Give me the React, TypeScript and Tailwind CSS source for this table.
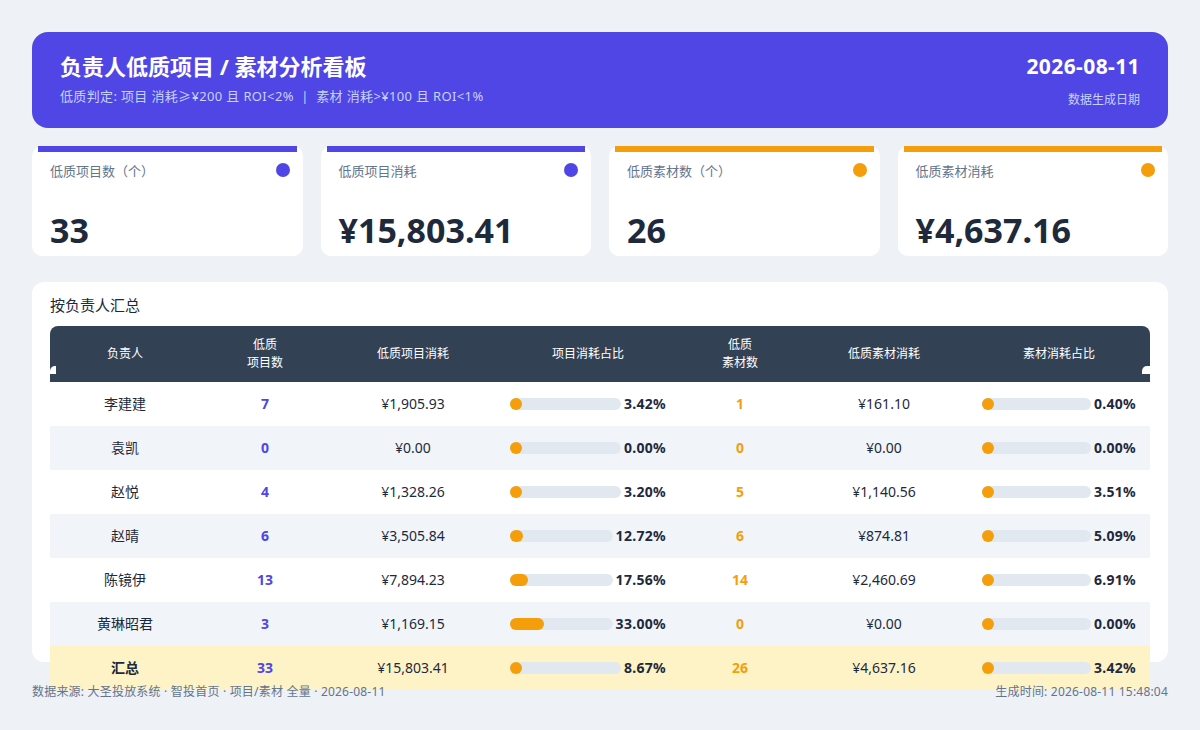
import React from "react";

const FONT = { fontFamily: '"Noto Sans", "Noto Sans CJK SC", sans-serif' };

const cards = [
  { label: "低质项目数（个）", value: "33", bar: "bg-[#4f46e5]" },
  { label: "低质项目消耗", value: "¥15,803.41", bar: "bg-[#4f46e5]" },
  { label: "低质素材数（个）", value: "26", bar: "bg-[#f59e0b]" },
  { label: "低质素材消耗", value: "¥4,637.16", bar: "bg-[#f59e0b]" },
];

const rows = [
  { name: "李建建", pc: 7, pcost: "¥1,905.93", pr: 3.42, mc: 1, mcost: "¥161.10", mr: 0.4 },
  { name: "袁凯", pc: 0, pcost: "¥0.00", pr: 0, mc: 0, mcost: "¥0.00", mr: 0 },
  { name: "赵悦", pc: 4, pcost: "¥1,328.26", pr: 3.2, mc: 5, mcost: "¥1,140.56", mr: 3.51 },
  { name: "赵晴", pc: 6, pcost: "¥3,505.84", pr: 12.72, mc: 6, mcost: "¥874.81", mr: 5.09 },
  { name: "陈镜伊", pc: 13, pcost: "¥7,894.23", pr: 17.56, mc: 14, mcost: "¥2,460.69", mr: 6.91 },
  { name: "黄琳昭君", pc: 3, pcost: "¥1,169.15", pr: 33.0, mc: 0, mcost: "¥0.00", mr: 0 },
];

const total = { name: "汇总", pc: 33, pcost: "¥15,803.41", pr: 8.67, mc: 26, mcost: "¥4,637.16", mr: 3.42 };

const COLS = "grid grid-cols-[150px_130px_166px_184px_120px_168px_182px]";

const Ratio = ({ value }: { value: number }) => (
  <div className="flex items-center gap-[3px] px-[14px]">
    <div className="flex-1 h-3 rounded-full bg-[#e2e8f0]">
      <div
        className="h-3 min-w-[12px] rounded-full bg-[#f59e0b]"
        style={{ width: `${value}%` }}
      />
    </div>
    <span className="text-sm font-bold tracking-[0.3px] text-[#1e293b]">{value.toFixed(2)}%</span>
  </div>
);

const Row = ({ r, bg, bold }: { r: typeof total; bg: string; bold?: boolean }) => (
  <div className={`${COLS} h-11 items-center text-sm text-[#1e293b] ${bg}`}>
    <div className={`text-center ${bold ? "font-bold" : ""}`}>{r.name}</div>
    <div className="text-center font-bold text-[#4f46e5]">{r.pc}</div>
    <div className="text-center">{r.pcost}</div>
    <Ratio value={r.pr} />
    <div className="text-center font-bold text-[#f59e0b]">{r.mc}</div>
    <div className="text-center">{r.mcost}</div>
    <Ratio value={r.mr} />
  </div>
);

export default function App() {
  return (
    <div style={FONT} className="w-[1200px] h-[730px] bg-[#eef1f6] px-8 pt-8 flex flex-col">
      {/* header */}
      <div className="h-24 shrink-0 rounded-2xl bg-[#4f46e5] px-7 pt-5 flex justify-between">
        <div>
          <h1 className="text-[22px] leading-7 font-bold text-white">负责人低质项目 / 素材分析看板</h1>
          <p className="mt-2 text-[13px] leading-4 tracking-[0.35px] text-[#c7d2fe]">
            低质判定: 项目 消耗≥¥200 且 ROI&lt;2% &nbsp;|&nbsp; 素材 消耗&gt;¥100 且 ROI&lt;1%
          </p>
        </div>
        <div className="text-right">
          <div className="text-[21px] leading-7 font-bold tracking-[0.4px] text-white">2026-08-11</div>
          <div className="mt-3 text-xs leading-4 text-[#c7d2fe]">数据生成日期</div>
        </div>
      </div>

      {/* stat cards */}
      <div className="mt-[18px] grid grid-cols-4 gap-[18px] shrink-0">
        {cards.map((c) => (
          <div key={c.label} className="relative h-[110px] rounded-[10px] bg-white px-[18px] pt-[15px]">
            <div className={`absolute top-0 left-1.5 right-1.5 h-1.5 ${c.bar}`} />
            <div className={`absolute top-[17px] right-[13px] w-3.5 h-3.5 rounded-full ${c.bar}`} />
            <div className="text-[13px] leading-5 text-[#64748b]">{c.label}</div>
            <div className="mt-[29px] text-[34px] leading-10 font-bold text-[#1e293b]">{c.value}</div>
          </div>
        ))}
      </div>

      {/* table */}
      <div className="mt-[26px] h-[380px] shrink-0 rounded-xl bg-white px-[18px] pt-[13px]">
        <h2 className="text-[15px] leading-5 text-[#1e293b]">按负责人汇总</h2>
        <div className="mt-[11px]">
          <div className={`${COLS} relative h-14 items-center rounded-t-lg bg-[#334155] text-xs leading-[18px] text-white`}>
            <div className="text-center">负责人</div>
            <div className="text-center">低质<br />项目数</div>
            <div className="text-center">低质项目消耗</div>
            <div className="text-center">项目消耗占比</div>
            <div className="text-center">低质<br />素材数</div>
            <div className="text-center">低质素材消耗</div>
            <div className="text-center">素材消耗占比</div>
            <span className="absolute left-0 bottom-2 w-[6px] h-[8px] rounded-tl-[5px] bg-white" />
            <span className="absolute right-0 bottom-2 w-[8px] h-[8px] rounded-tl-[5px] bg-white" />
          </div>
          {rows.map((r, i) => (
            <Row key={r.name} r={r} bg={i % 2 ? "bg-[#f1f5f9]" : "bg-white"} />
          ))}
          <Row r={total} bg="bg-[#fef3c7]" bold />
        </div>
      </div>

      {/* footer */}
      <div className="relative mt-[22px] flex justify-between text-xs leading-4 tracking-[0.2px] text-[#64748b]">
        <span>数据来源: 大圣投放系统 · 智投首页 · 项目/素材 全量 · 2026-08-11</span>
        <span>生成时间: 2026-08-11 15:48:04</span>
      </div>
    </div>
  );
}
